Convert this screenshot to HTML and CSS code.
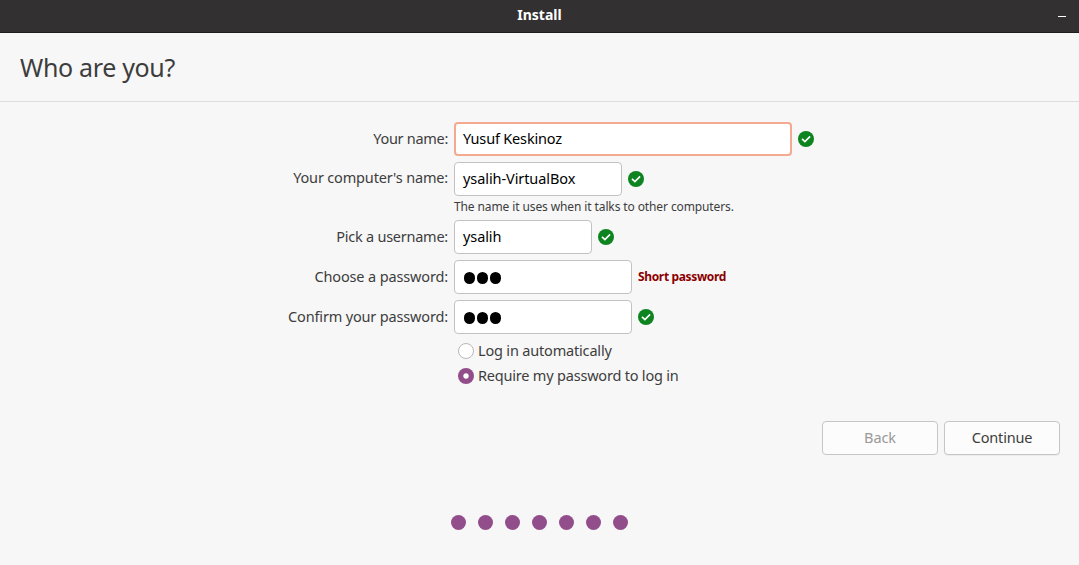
FILE: index.html
```html
<!DOCTYPE html>
<html lang="en">
<head>
<meta charset="utf-8">
<title>Install</title>
<link rel="stylesheet" href="styles.css">
</head>
<body>
<svg width="0" height="0" class="defs"><symbol id="ok" viewBox="0 0 16 16"><circle cx="8" cy="8" r="8" fill="#0e8420"/><path d="M4 7.8 6.9 10.6 12.1 5.4" fill="none" stroke="#fff" stroke-width="1.6"/></symbol></svg>
<div class="titlebar"><span></span><span class="title">Install</span><span class="minimize"></span></div>
<header class="header"><h1 class="heading">Who are you?</h1></header>
<main class="form">
  <div class="row"><label class="label l-name">Your name:</label><div class="field f-name focused"><span>Yusuf Keskinoz</span></div><svg class="ok"><use href="#ok"/></svg></div>
  <div class="row"><label class="label l-computer">Your computer's name:</label><div class="field f-computer"><span>ysalih-VirtualBox</span></div><svg class="ok"><use href="#ok"/></svg></div>
  <div class="hint">The name it uses when it talks to other computers.</div>
  <div class="row"><label class="label l-user">Pick a username:</label><div class="field f-user"><span>ysalih</span></div><svg class="ok"><use href="#ok"/></svg></div>
  <div class="row"><label class="label l-pass">Choose a password:</label><div class="field f-pass"><i class="bullet"></i><i class="bullet"></i><i class="bullet"></i></div><strong class="warning">Short password</strong></div>
  <div class="row"><label class="label l-confirm">Confirm your password:</label><div class="field f-pass"><i class="bullet"></i><i class="bullet"></i><i class="bullet"></i></div><svg class="ok"><use href="#ok"/></svg></div>
  <div class="options">
    <label class="option"><i class="radio"></i><span class="o-auto">Log in automatically</span></label>
    <label class="option"><i class="radio checked"></i><span class="o-require">Require my password to log in</span></label>
  </div>
</main>
<div class="actions"><button class="button back" disabled>Back</button><button class="button continue">Continue</button></div>
<footer class="steps"><i></i><i></i><i></i><i></i><i></i><i></i><i></i></footer>
</body>
</html>
```
FILE: styles.css
```css
* { box-sizing: border-box; }
body {
  margin: 0;
  height: 565px;
  overflow: hidden;
  background: #f7f7f7;
  color: #3d3d3d;
  font: 14.5px/20px "Noto Sans", "Open Sans", sans-serif;
  white-space: nowrap;
}
.defs { display: block; }
.titlebar {
  display: grid;
  grid-template-columns: 1fr auto 1fr;
  align-items: center;
  height: 33px;
  padding: 0 13px 2px;
  background: #333031;
  border-bottom: 1px solid #1e1c1d;
}
.title { color: #fff; font-weight: 700; font-size: 14px; }
.minimize { justify-self: end; width: 8px; height: 1px; margin-top: 2px; background: #fff; }
.header { height: 69px; padding: 16px 20px 0; border-bottom: 1px solid #dcdcdc; }
.heading { margin: 0; font-size: 25px; font-weight: 400; line-height: 36px; letter-spacing: -0.33px; }
.form { display: flex; flex-direction: column; gap: 6px; padding-top: 20px; }
.row { display: flex; align-items: center; gap: 6px; height: 34px; }
.label { width: 448px; display: flex; justify-content: flex-end; padding-bottom: 2px; }
.l-name { letter-spacing: -0.3px; }
.l-computer { letter-spacing: -0.17px; padding-bottom: 4px; }
.l-user { letter-spacing: -0.25px; }
.l-pass { letter-spacing: -0.14px; }
.l-confirm { letter-spacing: -0.16px; }
.field {
  display: flex;
  align-items: center;
  height: 34px;
  padding: 0 8px 2px;
  background: #fff;
  border: 1px solid #c2c2c2;
  border-radius: 4px;
  color: #000;
}
.focused { border: 2px solid #f4aa90; padding: 0 7px 2px; }
.f-name { width: 338px; letter-spacing: -0.18px; }
.f-computer { width: 168px; letter-spacing: -0.08px; }
.f-user { width: 138px; letter-spacing: -0.1px; }
.f-pass { width: 178px; padding: 2px 8.5px 0; gap: 1.5px; }
.bullet { width: 11.5px; height: 11.5px; border-radius: 50%; background: #000; }
.ok { width: 16px; height: 16px; }
.hint { height: 18px; margin: -3px 0; padding-left: 454px; font-size: 12px; line-height: 16px; letter-spacing: -0.11px; }
.warning { color: #8b0000; font-size: 12px; letter-spacing: -0.35px; }
.options { display: flex; flex-direction: column; gap: 5px; margin-top: 1px; padding-left: 458px; }
.option { display: flex; align-items: center; gap: 4px; height: 20px; }
.o-auto { letter-spacing: -0.18px; padding-bottom: 2px; }
.o-require { letter-spacing: -0.2px; padding-bottom: 2px; }
.radio { width: 16px; height: 16px; border: 1px solid #b8b8b8; border-radius: 50%; background: #fff; }
.radio.checked { border: none; background: radial-gradient(circle, #fff 2.2px, #924d8b 3.2px); }
.actions { display: flex; justify-content: flex-end; gap: 6px; margin-top: 35px; padding-right: 19px; }
.button {
  width: 116px;
  height: 34px;
  padding: 0 0 2px;
  background: #fcfcfc;
  border: 1px solid #c6c6c6;
  border-radius: 4px;
  color: #3d3d3d;
  font: inherit;
  letter-spacing: -0.2px;
}
.continue { box-shadow: 0 1px 1px #0000000d; }
.back { color: #999; letter-spacing: -0.1px; }
.steps { display: flex; justify-content: center; gap: 12px; margin-top: 60px; }
.steps i { width: 15px; height: 15px; border-radius: 50%; background: #924d8b; }
```
